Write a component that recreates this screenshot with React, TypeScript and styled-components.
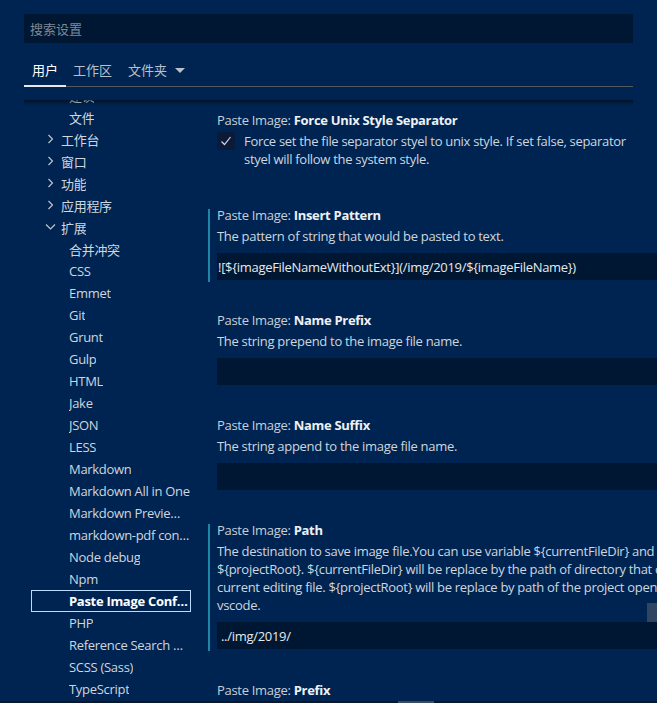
import React from "react";
import styled, { createGlobalStyle } from "styled-components";

const GlobalStyle = createGlobalStyle`
  html, body {
    margin: 0;
    padding: 0;
    background: #002451;
    overflow: hidden;
  }
  body {
    font-family: "Open Sans", "Noto Sans CJK SC", sans-serif;
    font-size: 13px;
    letter-spacing: -0.3px;
    color: #cfd6df;
  }
`;

const Page = styled.div`
  position: relative;
  width: 657px;
  height: 703px;
  box-sizing: border-box;
  padding: 14px 24px 0 24px;
  overflow: hidden;
  display: flex;
  flex-direction: column;
`;

const SearchBox = styled.div`
  height: 29px;
  background: #001733;
  display: flex;
  align-items: center;
  padding-left: 6px;
  color: #7d8796;
  font-family: "Noto Sans CJK SC", sans-serif;
  font-size: 13px;
  letter-spacing: 0;
  flex-shrink: 0;
`;

const TabBar = styled.div`
  margin-top: 11px;
  height: 32px;
  display: flex;
  align-items: stretch;
  border-bottom: 1px solid #555a5f;
  flex-shrink: 0;
`;

const Tab = styled.div<{ $active?: boolean }>`
  display: flex;
  align-items: center;
  gap: 7px;
  padding: 0 8px;
  margin-bottom: -1px;
  font-family: "Noto Sans CJK SC", sans-serif;
  font-size: 13px;
  letter-spacing: 0;
  color: ${(p) => (p.$active ? "#ffffff" : "#b9c0c9")};
  border-bottom: 2px solid ${(p) => (p.$active ? "#e8e8e8" : "transparent")};
  &:first-child {
    width: 42px;
    box-sizing: border-box;
  }
  &:nth-child(2) {
    padding-left: 7px;
  }
`;

const Caret = styled.span`
  width: 0;
  height: 0;
  border-left: 5px solid transparent;
  border-right: 5px solid transparent;
  border-top: 5px solid #b9c0c9;
  margin-top: 1px;
  margin-left: 1px;
`;

const Body = styled.div`
  position: relative;
  margin-top: 13px;
  flex: 1;
  display: flex;
  min-height: 0;
`;

const ScrollShadow = styled.div`
  position: absolute;
  left: 0;
  right: 0;
  top: 0;
  height: 6px;
  box-shadow: #000000 0 6px 6px -6px inset;
  z-index: 2;
`;

const Tree = styled.div`
  width: 184px;
  flex-shrink: 0;
  overflow: hidden;
  padding-left: 7px;
  box-sizing: border-box;
`;

const TreeList = styled.div`
  margin-top: -16px;
  display: flex;
  flex-direction: column;
`;

const TreeRow = styled.div<{ $level: number; $selected?: boolean }>`
  width: 160px;
  height: 22px;
  box-sizing: border-box;
  display: flex;
  align-items: center;
  padding-left: ${(p) => 13 + (p.$level - 1) * 8}px;
  border: 1px solid ${(p) => (p.$selected ? "#bbdaff" : "transparent")};
  color: ${(p) => (p.$selected ? "#ffffff" : "#cfd6df")};
  font-weight: ${(p) => (p.$selected ? 700 : 400)};
  white-space: nowrap;
  overflow: hidden;
`;

const Twistie = styled.span`
  width: 16px;
  flex-shrink: 0;
  display: flex;
  align-items: center;
  justify-content: flex-start;
  padding-left: 2px;
  box-sizing: border-box;
`;

const RowLabel = styled.span`
  overflow: hidden;
  text-overflow: ellipsis;
  white-space: nowrap;
`;

const Content = styled.div`
  width: 560px;
  flex-shrink: 0;
  padding-top: 11px;
  display: flex;
  flex-direction: column;
`;

const Setting = styled.div<{ $modified?: boolean; $gap: number }>`
  border-left: 2px solid ${(p) => (p.$modified ? "#1b86a8" : "transparent")};
  padding: 0 0 2px 7px;
  margin-top: ${(p) => p.$gap}px;
  display: flex;
  flex-direction: column;
`;

const Title = styled.div<{ $modified?: boolean }>`
  line-height: 18px;
  height: 18px;
  margin-top: ${(p) => (p.$modified ? -3 : 0)}px;
  white-space: nowrap;
  color: #c8cfd8;
`;

const Key = styled.span`
  font-weight: 700;
  color: #eef1f4;
`;

const Description = styled.div`
  margin-top: 3px;
  line-height: 18px;
  color: #cfd6df;
  white-space: nowrap;
`;

const CheckRow = styled.div`
  margin-top: 3px;
  display: flex;
  align-items: flex-start;
  gap: 9px;
`;

const CheckBox = styled.div`
  width: 18px;
  height: 18px;
  border-radius: 3px;
  background: #0a1a38;
  display: flex;
  align-items: center;
  justify-content: center;
  flex-shrink: 0;
`;

const CheckText = styled.div`
  line-height: 18px;
  color: #cfd6df;
  white-space: nowrap;
`;

const Input = styled.div<{ $indent?: number }>`
  margin-top: 8px;
  height: 27px;
  width: 540px;
  background: #001733;
  display: flex;
  align-items: center;
  box-sizing: border-box;
  padding-left: ${(p) => p.$indent ?? 1}px;
  color: #e6e9ed;
  white-space: nowrap;
`;

const VScrollSlider = styled.div`
  position: absolute;
  right: 0;
  top: 603px;
  width: 10px;
  height: 19px;
  background: rgba(121, 121, 121, 0.4);
  z-index: 3;
`;

const HScrollBar = styled.div`
  position: absolute;
  left: 0;
  right: 0;
  bottom: 0;
  height: 2px;
  background: #0b1727;
  z-index: 3;
`;

const HScrollThumb = styled.div`
  position: absolute;
  left: 398px;
  width: 36px;
  top: 0;
  height: 2px;
  background: #3c4a5e;
`;

const ChevronRight = () => (
  <svg width="8" height="10" viewBox="0 0 8 10">
    <polyline points="1.5,1 5.5,5 1.5,9" fill="none" stroke="#c5c8cc" strokeWidth="1.1" />
  </svg>
);

const ChevronDown = () => (
  <svg width="11" height="8" viewBox="0 0 11 8" style={{ marginLeft: -2 }}>
    <polyline points="1,1.5 5.5,6 10,1.5" fill="none" stroke="#c5c8cc" strokeWidth="1.1" />
  </svg>
);

const CheckMark = () => (
  <svg width="14" height="14" viewBox="0 0 14 14">
    <polyline points="2.5,7.5 5.5,10.5 11.5,3" fill="none" stroke="#d5dae0" strokeWidth="1.2" />
  </svg>
);

type Row = { label: string; level: number; chevron?: "right" | "down"; selected?: boolean };

const rows: Row[] = [
  { label: "建议", level: 2 },
  { label: "文件", level: 2 },
  { label: "工作台", level: 1, chevron: "right" },
  { label: "窗口", level: 1, chevron: "right" },
  { label: "功能", level: 1, chevron: "right" },
  { label: "应用程序", level: 1, chevron: "right" },
  { label: "扩展", level: 1, chevron: "down" },
  { label: "合并冲突", level: 2 },
  { label: "CSS", level: 2 },
  { label: "Emmet", level: 2 },
  { label: "Git", level: 2 },
  { label: "Grunt", level: 2 },
  { label: "Gulp", level: 2 },
  { label: "HTML", level: 2 },
  { label: "Jake", level: 2 },
  { label: "JSON", level: 2 },
  { label: "LESS", level: 2 },
  { label: "Markdown", level: 2 },
  { label: "Markdown All in One", level: 2 },
  { label: "Markdown Preview Enhanced", level: 2 },
  { label: "markdown-pdf configuration", level: 2 },
  { label: "Node debug", level: 2 },
  { label: "Npm", level: 2 },
  { label: "Paste Image Configuration", level: 2, selected: true },
  { label: "PHP", level: 2 },
  { label: "Reference Search View", level: 2 },
  { label: "SCSS (Sass)", level: 2 },
  { label: "TypeScript", level: 2 },
];

export default function App() {
  return (
    <>
      <GlobalStyle />
      <Page>
        <SearchBox>搜索设置</SearchBox>
        <TabBar>
          <Tab $active>用户</Tab>
          <Tab>工作区</Tab>
          <Tab>
            文件夹
            <Caret />
          </Tab>
        </TabBar>
        <Body>
          <ScrollShadow />
          <Tree>
            <TreeList>
              {rows.map((r) => (
                <TreeRow key={r.label} $level={r.level} $selected={r.selected}>
                  <Twistie>
                    {r.chevron === "right" && <ChevronRight />}
                    {r.chevron === "down" && <ChevronDown />}
                  </Twistie>
                  <RowLabel>{r.label}</RowLabel>
                </TreeRow>
              ))}
            </TreeList>
          </Tree>
          <Content>
            <Setting $gap={0}>
              <Title>
                Paste Image: <Key>Force Unix Style Separator</Key>
              </Title>
              <CheckRow>
                <CheckBox>
                  <CheckMark />
                </CheckBox>
                <CheckText>
                  Force set the file separator styel to unix style. If set false, separator
                  <br />
                  styel will follow the system style.
                </CheckText>
              </CheckRow>
            </Setting>
            <Setting $modified $gap={39}>
              <Title $modified>
                Paste Image: <Key>Insert Pattern</Key>
              </Title>
              <Description>The pattern of string that would be pasted to text.</Description>
              <Input>{"![${imageFileNameWithoutExt}](/img/2019/${imageFileName})"}</Input>
            </Setting>
            <Setting $gap={29}>
              <Title>
                Paste Image: <Key>Name Prefix</Key>
              </Title>
              <Description>The string prepend to the image file name.</Description>
              <Input />
            </Setting>
            <Setting $gap={29}>
              <Title>
                Paste Image: <Key>Name Suffix</Key>
              </Title>
              <Description>The string append to the image file name.</Description>
              <Input />
            </Setting>
            <Setting $modified $gap={32}>
              <Title $modified>
                Paste Image: <Key>Path</Key>
              </Title>
              <Description>
                {"The destination to save image file.You can use variable ${currentFileDir} and"}
                <br />
                {"${projectRoot}. ${currentFileDir} will be replace by the path of directory that contain"}
                <br />
                {"current editing file. ${projectRoot} will be replace by path of the project opened in"}
                <br />
                vscode.
              </Description>
              <Input $indent={4}>../img/2019/</Input>
            </Setting>
            <Setting $gap={30}>
              <Title>
                Paste Image: <Key>Prefix</Key>
              </Title>
            </Setting>
          </Content>
        </Body>
        <VScrollSlider />
        <HScrollBar>
          <HScrollThumb />
        </HScrollBar>
      </Page>
    </>
  );
}
